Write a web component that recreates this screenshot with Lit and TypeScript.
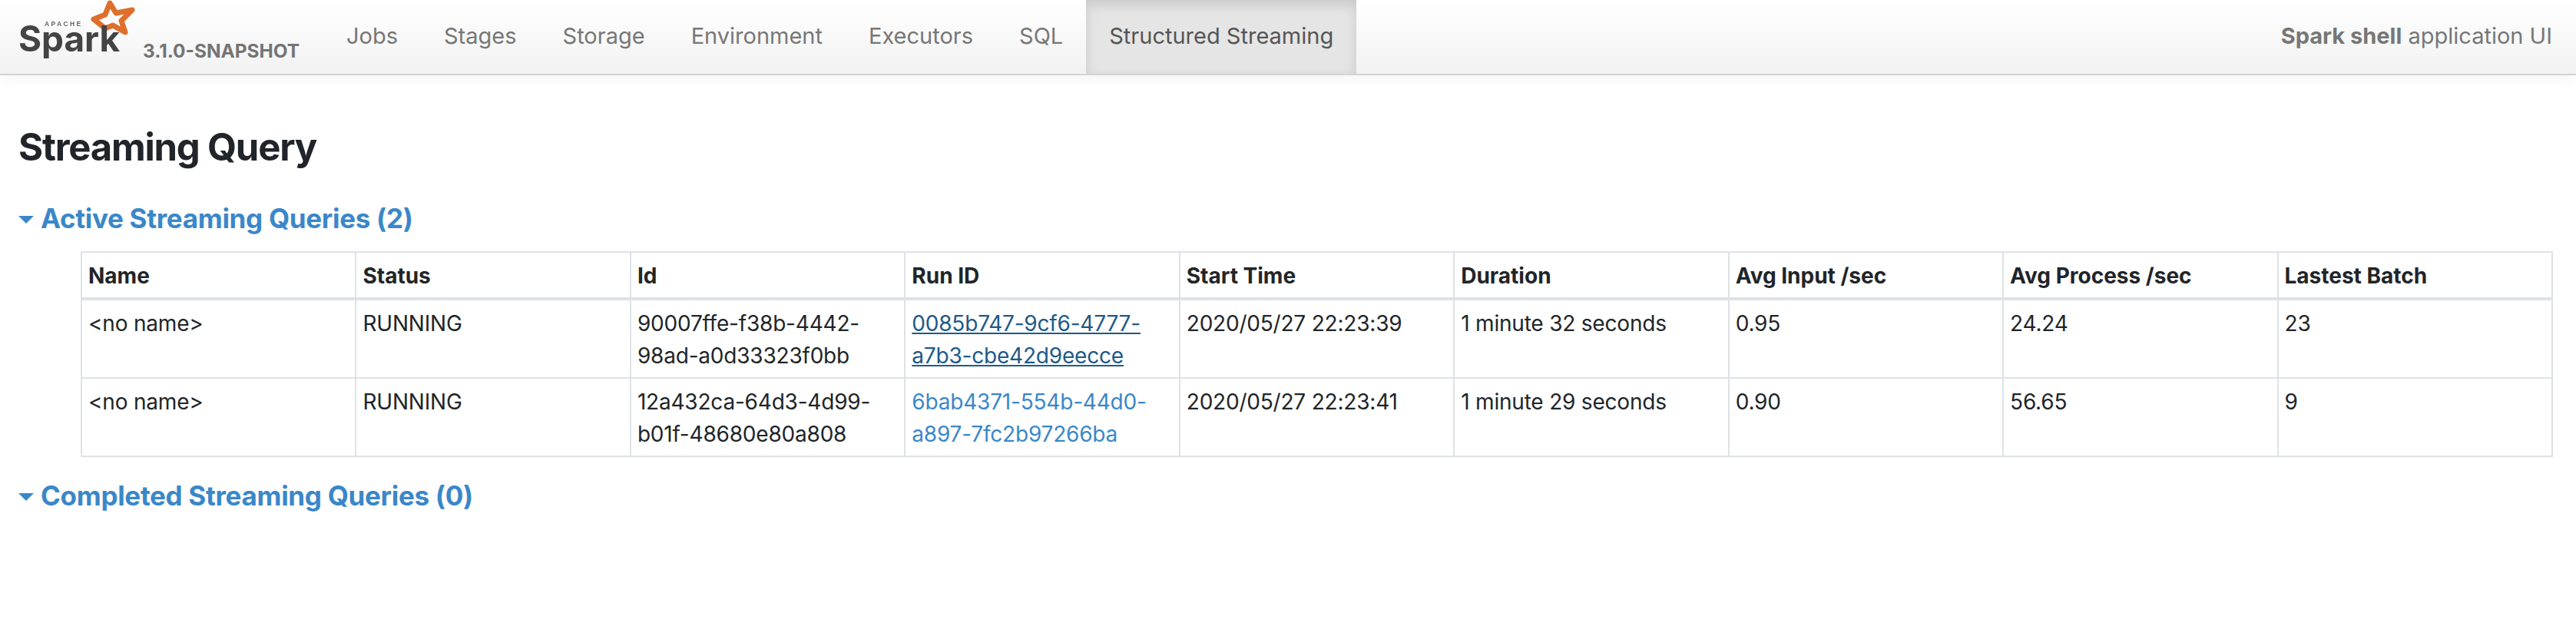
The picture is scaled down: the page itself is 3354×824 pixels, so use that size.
import { LitElement, html, css } from "lit";
import { customElement } from "lit/decorators.js";

const NAV = ["Jobs", "Stages", "Storage", "Environment", "Executors", "SQL"];
const HEAD = ["Name", "Status", "Id", "Run ID", "Start Time", "Duration", "Avg Input /sec", "Avg Process /sec", "Lastest Batch"];
const ROWS = [
  { id: "90007ffe-f38b-4442-98ad-a0d33323f0bb", run: "0085b747-9cf6-4777-a7b3-cbe42d9eecce", hover: true, start: "2020/05/27 22:23:39", dur: "1 minute 32 seconds", inp: "0.95", proc: "24.24", batch: "23" },
  { id: "12a432ca-64d3-4d99-b01f-48680e80a808", run: "6bab4371-554b-44d0-a897-7fc2b97266ba", hover: false, start: "2020/05/27 22:23:41", dur: "1 minute 29 seconds", inp: "0.90", proc: "56.65", batch: "9" },
];

@customElement("app-root")
export class AppRoot extends LitElement {
  static styles = css`
    :host { display: block; min-height: 824px; background: #fff; font-family: Inter, "Liberation Sans", sans-serif; font-size: 28px; line-height: 42px; color: #212529; overflow: hidden; }
    * { box-sizing: border-box; }
    nav { display: flex; align-items: stretch; height: 98px; padding-left: 24px; padding-right: 31px; background: linear-gradient(to bottom, #fff, #f2f2f2); border-bottom: 2px solid #d4d4d4; box-shadow: 0 2px 20px rgba(0,0,0,.06); font-size: 29px; }
    .brand { display: flex; align-items: flex-start; width: 397px; flex: none; }
    .logo { width: 160px; height: 84px; flex: none; margin-left: -2px; filter: blur(.7px); }
    .version { font-size: 24.4px; font-weight: 700; color: #747474; line-height: 28px; margin-top: 52px; margin-left: 4px; white-space: nowrap; }
    .tabs { display: flex; }
    .tab { padding: 26px 30px 0; color: #777; white-space: nowrap; }
    .tab.active { background: #e5e5e5; color: #555; box-shadow: inset 0 6px 16px rgba(0,0,0,.125); }
    .app { margin-left: auto; padding-top: 26px; color: #777; white-space: nowrap; }
    .app b { font-weight: 700; }
    main { padding: 0 24px; }
    h3 { margin: 65px 0 0; font-size: 49px; line-height: 58px; font-weight: 700; letter-spacing: -1.2px; }
    .sec { display: flex; align-items: center; gap: 9px; font-size: 35px; font-weight: 700; line-height: 42px; letter-spacing: -.3px; color: #3a87c9; }
    .sec.one { margin-top: 42px; }
    .sec.two { margin-top: 29px; }
    .tri { width: 20px; height: 10px; flex: none; display: block; margin-top: 4px; }
    table { margin: 22px 0 0 81px; width: 3219px; table-layout: fixed; border-collapse: separate; border-spacing: 0; border-top: 2px solid #dee2e6; border-left: 2px solid #dee2e6; }
    th, td { border-right: 2px solid #dee2e6; border-bottom: 2px solid #dee2e6; padding: 9px 8px 7px; text-align: left; vertical-align: top; }
    th { border-bottom-width: 4px; font-weight: 700; }
    td { letter-spacing: -.2px; }
    a { color: #3a87c9; text-decoration: none; }
    a.hover { color: #1d5a8a; text-decoration: underline; }
  `;

  render() {
    return html`
      <nav>
        <div class="brand">
          <svg class="logo" viewBox="22 0 160 84" aria-label="Apache Spark logo">
            <path fill="none" stroke="#de6f2c" stroke-width="7" stroke-linejoin="round" d="M143 4 L151 17 L172 13 L158 27 L163 42 L147 33 L137 37 L122 25 L137 19 Z"/>
            <text x="58" y="34" font-family="'Liberation Sans', sans-serif" font-size="8.5" font-weight="700" letter-spacing="2.4" fill="#666">APACHE</text>
            <text x="24" y="67" font-family="Inter, sans-serif" font-size="46" font-weight="700" fill="#444" textLength="132" lengthAdjust="spacingAndGlyphs">Spark</text>
          </svg>
          <span class="version">3.1.0-SNAPSHOT</span>
        </div>
        <div class="tabs">
          ${NAV.map((n) => html`<div class="tab">${n}</div>`)}
          <div class="tab active">Structured Streaming</div>
        </div>
        <div class="app"><b>Spark shell</b> application UI</div>
      </nav>
      <main>
        <h3>Streaming Query</h3>
        <div class="sec one">${this.tri()}<span>Active Streaming Queries (2)</span></div>
        <table>
          <thead><tr>${HEAD.map((h) => html`<th>${h}</th>`)}</tr></thead>
          <tbody>
            ${ROWS.map((r) => html`<tr>
              <td>&lt;no name&gt;</td><td>RUNNING</td><td>${r.id}</td>
              <td><a href="#" class=${r.hover ? "hover" : ""}>${r.run}</a></td>
              <td>${r.start}</td><td>${r.dur}</td><td>${r.inp}</td><td>${r.proc}</td><td>${r.batch}</td>
            </tr>`)}
          </tbody>
        </table>
        <div class="sec two">${this.tri()}<span>Completed Streaming Queries (0)</span></div>
      </main>
    `;
  }

  tri() {
    return html`<svg class="tri" viewBox="0 0 20 10"><path d="M0 0H20L10 10Z" fill="#3a87c9"/></svg>`;
  }
}
